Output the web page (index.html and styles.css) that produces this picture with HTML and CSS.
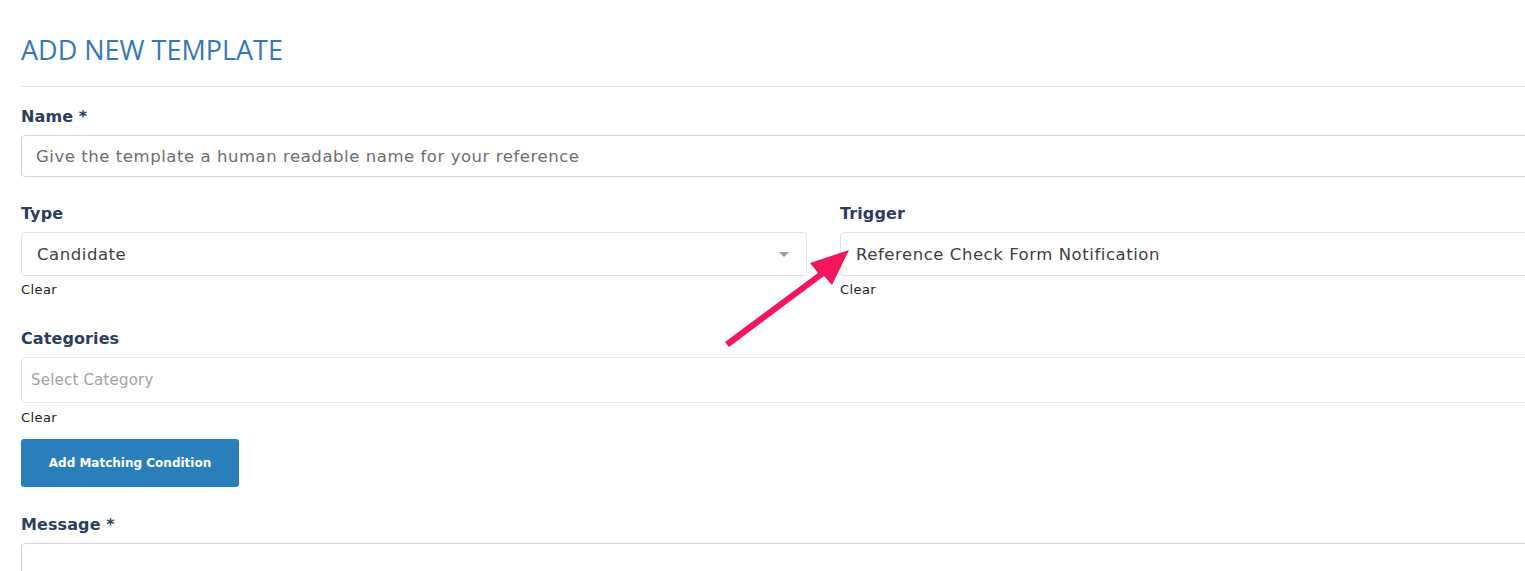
FILE: index.html
```html
<!DOCTYPE html>
<html lang="en">
<head>
    <meta charset="UTF-8">
    <meta name="viewport" content="width=device-width, initial-scale=1.0">
    <title>Add New Template</title>
    <link rel="stylesheet" href="styles.css">
</head>
<body>
    <div class="page">
        <h1 class="title">ADD NEW TEMPLATE</h1>
        <form class="form">
            <div class="field">
                <label class="label">Name *</label>
                <div class="input placeholder">Give the template a human readable name for your reference</div>
            </div>

            <div class="row">
                <div class="field">
                    <label class="label">Type</label>
                    <div class="input select">
                        <span>Candidate</span>
                        <span class="caret"></span>
                    </div>
                    <a class="clear">Clear</a>
                </div>
                <div class="field">
                    <label class="label">Trigger</label>
                    <div class="input select">
                        <span>Reference Check Form Notification</span>
                    </div>
                    <a class="clear">Clear</a>
                </div>
            </div>

            <div class="field">
                <label class="label">Categories</label>
                <div class="input multi">Select Category</div>
                <a class="clear cat-clear">Clear</a>
            </div>

            <button type="button" class="btn">Add Matching Condition</button>

            <div class="field message">
                <label class="label">Message *</label>
                <div class="input editor"></div>
            </div>
        </form>
    </div>

    <!-- annotation arrow -->
    <svg class="arrow" width="140" height="110" viewBox="0 0 140 110">
        <path d="M5 102 L98 33 L90 23 L129 10 L112 45 L104 36 L9 107 Z" fill="#f2175c"/>
    </svg>
</body>
</html>
```

FILE: styles.css
```css
* {
    margin: 0;
    padding: 0;
    box-sizing: border-box;
}
html, body {
    overflow: hidden;
    background: #fff;
}
body {
    font-family: "DejaVu Sans", "Noto Sans", sans-serif;
    color: #333;
    position: relative;
    height: 571px;
}
.page {
    width: 1625px;
    height: 571px;
    overflow: hidden;
    padding: 30px 0 0 21px;
}
.title {
    font-family: "Open Sans", "Noto Sans", sans-serif;
    font-weight: 400;
    font-size: 27px;
    color: #3479b5;
    line-height: 40px;
    padding-bottom: 16px;
    border-bottom: 1px solid #e3e3e3;
    margin-bottom: 20px;
}
.form {
    display: flex;
    flex-direction: column;
}
.field {
    display: flex;
    flex-direction: column;
}
.label {
    font-weight: 700;
    font-size: 16px;
    letter-spacing: 0.1px;
    color: #2c3e5c;
    line-height: 20px;
    margin-bottom: 8px;
}
.input {
    border: 1px solid #d4d4d4;
    border-radius: 4px;
    height: 42px;
    display: flex;
    align-items: center;
    padding: 0 14px;
    font-size: 16.5px;
    letter-spacing: 0.55px;
    color: #6b6e72;
}
.row {
    display: grid;
    grid-template-columns: 786px 1fr;
    gap: 33px;
    margin-top: 27px;
}
.select {
    height: 44px;
    color: #3c4043;
    padding: 0 15px;
    border-color: #e2e2e2;
    justify-content: space-between;
}
.caret {
    width: 0;
    height: 0;
    border-left: 5px solid transparent;
    border-right: 5px solid transparent;
    border-top: 5px solid #999;
    margin-right: 2px;
}
.clear {
    font-size: 13px;
    letter-spacing: 0.4px;
    color: #222;
    line-height: 16px;
    margin-top: 6px;
}
.cat-clear {
    margin-top: 7px;
}
.row + .field {
    margin-top: 31px;
}
.multi {
    height: 46px;
    font-size: 15px;
    letter-spacing: 0.2px;
    color: #a2a2a2;
    padding: 0 9px;
    border-color: #e2e2e2;
}
.btn {
    align-self: flex-start;
    margin-top: 13px;
    width: 218px;
    height: 48px;
    border: none;
    border-radius: 3px;
    background: #2a7fba;
    color: #fff;
    font-family: "DejaVu Sans", sans-serif;
    font-weight: 700;
    font-size: 12px;
}
.message {
    margin-top: 28px;
}
.editor {
    height: 60px;
    border-color: #d4d4d4;
}
.arrow {
    position: absolute;
    left: 720px;
    top: 240px;
}
```
